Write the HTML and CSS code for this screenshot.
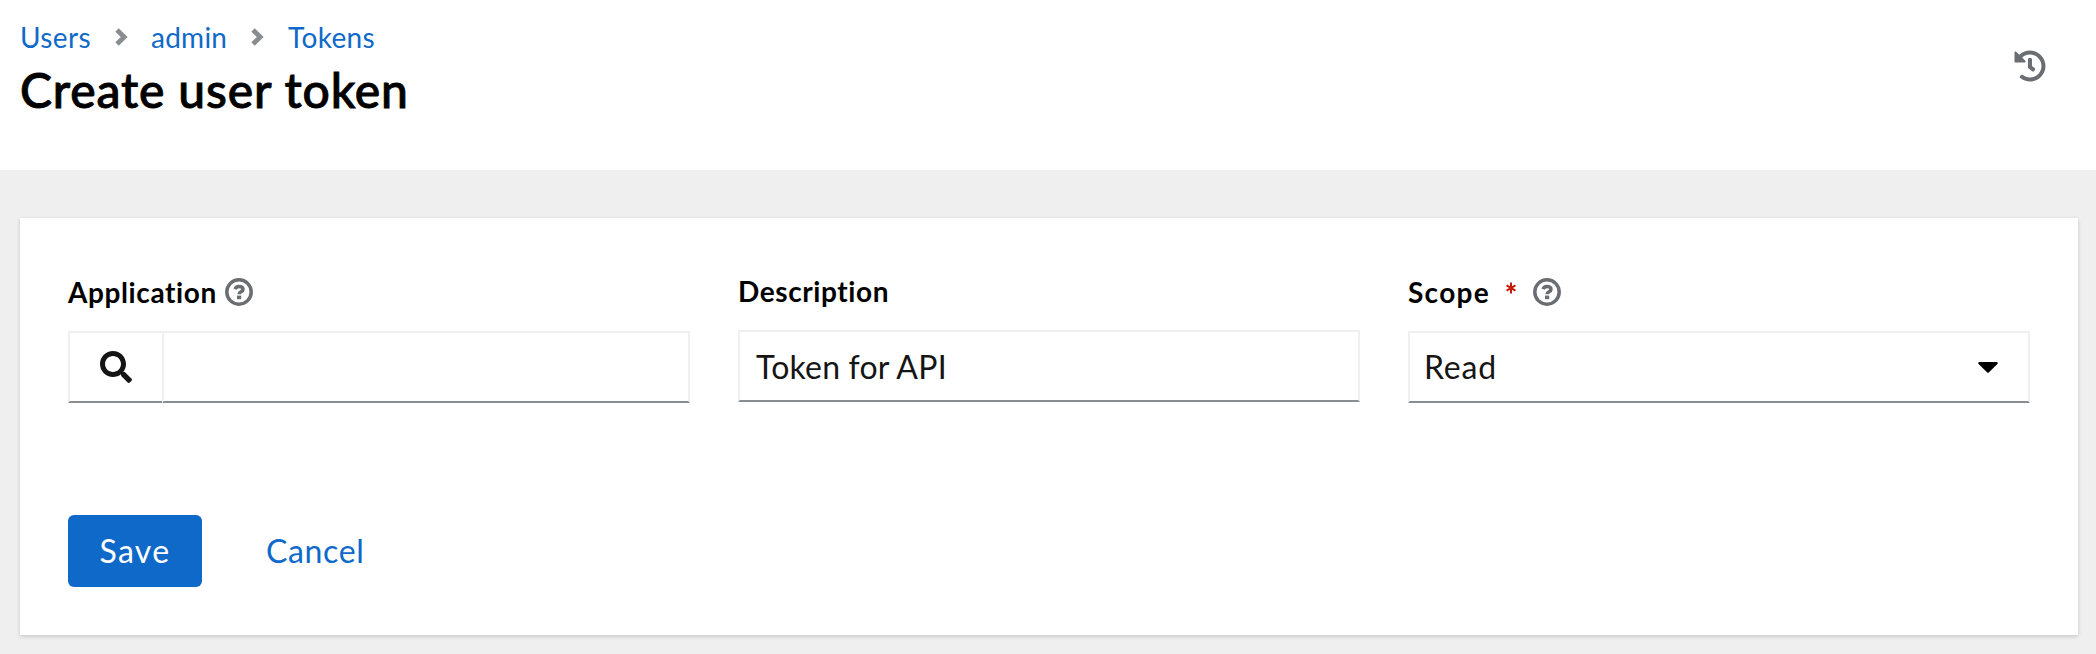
FILE: index.html
```html
<!DOCTYPE html>
<html lang="en">
<head>
<meta charset="utf-8">
<title>Create user token</title>
<link rel="stylesheet" href="styles.css">
</head>
<body>
<header class="page-header">
  <div>
    <nav class="breadcrumb">
      <a class="crumb-users">Users</a>
      <svg class="chevron" viewBox="0 0 12 18"><path d="M2 2 9.200 9 2 16"/></svg>
      <a class="crumb-admin">admin</a>
      <svg class="chevron" viewBox="0 0 12 18"><path d="M2 2 9.200 9 2 16"/></svg>
      <a class="crumb-tokens">Tokens</a>
    </nav>
    <h1 class="title">Create user token</h1>
  </div>
  <svg class="history" viewBox="0 0 512 512"><path d="M504 255.531c.253 136.640-111.180 248.372-247.820 248.468-59.015.042-113.223-20.530-155.822-54.911-11.077-8.940-11.905-25.541-1.839-35.607l11.267-11.267c8.609-8.609 22.353-9.551 31.891-1.984C173.062 425.135 212.781 440 256 440c101.705 0 184-82.311 184-184 0-101.705-82.311-184-184-184-48.814 0-93.149 18.969-126.068 49.932l50.754 50.754c10.080 10.080 2.941 27.314-11.313 27.314H24c-8.837 0-16-7.163-16-16V38.627c0-14.254 17.234-21.393 27.314-11.314l49.372 49.372C129.209 34.136 189.552 8 256 8c136.810 0 247.747 110.780 248 247.531zm-180.912 78.784l9.823-12.630c8.138-10.463 6.253-25.542-4.210-33.679L288 256.349V152c0-13.255-10.745-24-24-24h-16c-13.255 0-24 10.745-24 24v135.651l65.409 50.874c10.463 8.137 25.541 6.253 33.679-4.210z"/></svg>
</header>
<main class="card">
  <form class="fields">
    <div class="field">
      <div class="label"><span class="label-application">Application</span>
        <svg class="help" viewBox="0 0 28 28"><circle cx="14" cy="14" r="12.200"/><path d="M10 11.200c.7-2 2-2.700 3.900-2.700 2.500 0 4.100 1.100 4.100 2.900 0 2.500-3.900 2.300-3.900 4.800"/><rect x="12" y="17.600" width="4.200" height="3.600"/></svg>
      </div>
      <div class="search-group"><div class="control search-button"><svg viewBox="0 0 512 512"><path d="M505 442.700L405.300 343c-4.500-4.500-10.600-7-17-7H372c27.600-35.300 44-79.700 44-128C416 93.100 322.900 0 208 0S0 93.100 0 208s93.100 208 208 208c48.300 0 92.700-16.400 128-44v16.300c0 6.400 2.500 12.500 7 17l99.700 99.700c9.400 9.400 24.600 9.400 33.900 0l28.300-28.300c9.400-9.400 9.400-24.600.1-34zM208 336c-70.700 0-128-57.200-128-128 0-70.700 57.200-128 128-128 70.700 0 128 57.200 128 128 0 70.700-57.200 128-128 128z"/></svg></div><div class="control search-input"></div></div>
    </div>
    <div class="field field-plain">
      <div class="label"><span class="label-description">Description</span></div>
      <div class="control text-input"><span class="value-token">Token for API</span></div>
    </div>
    <div class="field">
      <div class="label"><span class="label-scope">Scope</span><svg class="required" viewBox="0 0 10 12"><path d="M5 .5v11M.5 3.300l9 5.400M9.500 3.300l-9 5.400"/></svg>
        <svg class="help" viewBox="0 0 28 28"><circle cx="14" cy="14" r="12.200"/><path d="M10 11.200c.7-2 2-2.700 3.900-2.700 2.500 0 4.100 1.100 4.100 2.900 0 2.500-3.900 2.300-3.900 4.800"/><rect x="12" y="17.600" width="4.200" height="3.600"/></svg>
      </div>
      <div class="control select"><span class="value-read">Read</span><svg class="caret" viewBox="0 0 20 11"><path d="M1.200 0h17.600q1.600.6.6 1.900L11 10.200q-1 1-2 0L.6 1.900Q-.4.6 1.200 0z"/></svg></div>
    </div>
  </form>
  <div class="actions"><a class="save">Save</a><a class="cancel">Cancel</a></div>
</main>
</body>
</html>
```
FILE: styles.css
```css
* { box-sizing: border-box; }
body {
  margin: 0;
  height: 654px;
  overflow: hidden;
  background: #efefef;
  font-family: Lato, "Open Sans", sans-serif;
  font-variant-ligatures: none;
  color: #151515;
}
.page-header {
  height: 170px;
  padding: 16px 50px 0 20px;
  display: flex;
  justify-content: space-between;
  background: #fff;
}
.breadcrumb {
  display: flex;
  align-items: center;
  height: 42px;
  font-size: 28px;
  line-height: 42px;
  color: #0f69c9;
}
.crumb-users { width: 95px; letter-spacing: .4px; }
.crumb-admin { width: 100px; letter-spacing: .25px; }
.crumb-tokens { margin-left: 1px; letter-spacing: .35px; }
.chevron { width: 12px; height: 18px; overflow: visible; fill: none; stroke: #8a8d90; stroke-width: 4.800; margin-right: 24px; }
.title {
  margin: 1px 0 0;
  font-size: 48px;
  line-height: 62px;
  font-weight: 500;
  letter-spacing: .85px;
  -webkit-text-stroke: .9px #000;
  color: #000;
  white-space: nowrap;
}
.history { width: 32px; height: 32px; margin-top: 34px; fill: #6a6e73; }
.card {
  margin: 48px 18px 0 20px;
  height: 417px;
  padding: 48px;
  background: #fff;
  box-shadow: 0 2px 4px rgba(3, 3, 3, .12), 0 0 4px rgba(3, 3, 3, .06);
}
.fields { display: grid; grid-template-columns: repeat(3, 1fr); gap: 48px; height: 249px; }
.label {
  display: flex;
  align-items: center;
  height: 65px;
  padding-bottom: 13px;
  font-size: 28px;
  line-height: 42px;
  font-weight: 700;
  color: #000;
}
.field-plain .label { height: 64px; padding-bottom: 14px; }
.label-application { width: 148px; letter-spacing: .6px; }
.label-description { letter-spacing: .6px; }
.label-scope { width: 82px; letter-spacing: 1.300px; }
.help { width: 28px; height: 28px; margin-left: 9px; fill: none; stroke: #6a6e73; stroke-width: 3.500; }
.help rect { fill: #6a6e73; stroke: none; }
.required { width: 10px; height: 12px; margin: 0 8px 9px 16px; stroke: #c9190b; stroke-width: 2; }
.control {
  display: flex;
  align-items: center;
  height: 72px;
  border: 2px solid #f0f0f0;
  border-bottom-color: #8a8d90;
  background: #fff;
  font-size: 32px;
  line-height: 48px;
}
.search-group { display: flex; }
.search-button { width: 96px; justify-content: center; margin-right: -2px; }
.search-button svg { width: 32px; height: 32px; fill: #151515; }
.search-input { flex: 1; }
.text-input { padding: 1px 0 0 16px; }
.value-token { letter-spacing: .2px; }
.select { padding: 0 30px 0 14px; justify-content: space-between; }
.value-read { letter-spacing: .8px; }
.caret { width: 20px; height: 11px; fill: #000; }
.actions { display: flex; gap: 64px; font-size: 32px; line-height: 72px; }
.save { width: 134px; height: 72px; border-radius: 6px; background: #0f69c9; color: #fff; text-align: center; letter-spacing: 1.300px; }
.cancel { color: #0f69c9; letter-spacing: .65px; }
```
